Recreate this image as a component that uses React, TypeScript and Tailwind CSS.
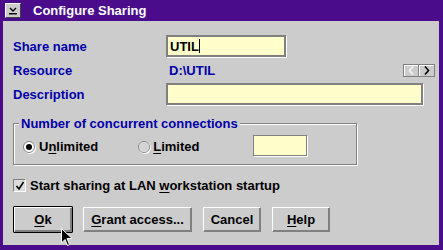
import * as React from "react";

const font = "font-['Liberation_Sans',Arial,sans-serif] font-bold text-[13px] leading-none";

function Field({ w, children }: { w: string; children?: React.ReactNode }) {
  return (
    <div
      className={`${w} h-[22px] flex items-center border-2 border-[#808080] bg-[#ffffcc] shadow-[1px_1px_0_#fff] pl-[1px]`}
    >
      {children}
    </div>
  );
}

function Radio({ checked }: { checked?: boolean }) {
  return (
    <span className="w-[12px] h-[12px] rounded-full border border-[#808080] bg-white flex items-center justify-center shadow-[1px_1px_0_#fff]">
      {checked ? (
        <span className="w-[6px] h-[6px] rounded-full bg-black" />
      ) : (
        <span className="w-[10px] h-[10px] rounded-full bg-[#d4d4d4]" />
      )}
    </span>
  );
}

function Btn({ w, children, isDefault }: { w: string; children: React.ReactNode; isDefault?: boolean }) {
  const inner = (
    <div
      className={`${w} h-[25px] flex items-center justify-center bg-[#cccccc] border border-t-white border-l-white border-b-[#808080] border-r-[#808080] shadow-[inset_-1px_-1px_0_#808080]`}
    >
      {children}
    </div>
  );
  if (isDefault) {
    return <div className="border border-black rounded-[1px]">{inner}</div>;
  }
  return <div className="mt-[1px] self-start">{inner}</div>;
}

export default function App() {
  return (
    <div className={`w-[443px] h-[250px] bg-[#4b0c8c] flex flex-col ${font}`}>
      {/* title bar */}
      <div className="h-[21px] flex items-center">
        <div className="ml-[5px] w-[16px] h-[15px] bg-[#cccccc] border border-t-white border-l-white border-b-[#404040] border-r-[#404040] flex items-center justify-center">
          <svg width="10" height="8" viewBox="0 0 10 8">
            <path d="M2 1 L5 4 L8 1" stroke="#000" strokeWidth="1.4" fill="none" />
            <rect x="1" y="6" width="8" height="1.5" fill="#000" />
          </svg>
        </div>
        <span className="ml-[12px] text-white">Configure Sharing</span>
      </div>

      {/* client area */}
      <div className="relative flex-1 ml-[3px] mr-[4px] mb-[5px] bg-[#cccccc] flex flex-col text-[#0000aa]">
        <div className="mt-[14px] h-[22px] flex items-center">
          <span className="w-[163px] pl-[10px]">Share name</span>
          <Field w="w-[120px]">
            <span className="text-black ml-[1px]">UTIL</span>
            <span className="w-[1px] h-[14px] bg-black" />
          </Field>
        </div>

        <div className="mt-[7px] h-[13px] flex items-center">
          <span className="w-[163px] pl-[10px]">Resource</span>
          <span className="pl-[3px]">D:\UTIL</span>
          <div className="ml-auto mr-[4px] flex">
            <span className="w-[16px] h-[13px] border border-[#808080] flex items-center justify-center shadow-[inset_1px_1px_0_#fff]">
              <svg width="6" height="9" viewBox="0 0 6 9">
                <path d="M5 0.5 L1.5 4.5 L5 8.5" stroke="#f4f4f4" strokeWidth="1.6" fill="none" />
              </svg>
            </span>
            <span className="w-[16px] h-[13px] border border-[#808080] border-l-0 flex items-center justify-center shadow-[inset_1px_1px_0_#fff]">
              <svg width="6" height="9" viewBox="0 0 6 9">
                <path d="M1 0.5 L4.5 4.5 L1 8.5" stroke="#000" strokeWidth="1.6" fill="none" />
              </svg>
            </span>
          </div>
        </div>

        <div className="mt-[6px] h-[22px] flex items-center">
          <span className="w-[163px] pl-[10px]">Description</span>
          <Field w="w-[257px]" />
        </div>

        {/* group box */}
        <div className="relative mt-[18px] ml-[10px] w-[344px] h-[42px] border border-[#808080] shadow-[1px_1px_0_#fff,inset_1px_1px_0_#fff]">
          <span className="absolute left-[5px] top-[-7px] bg-[#cccccc] px-[2px]">Number of concurrent connections</span>
          <div className="mt-[13px] flex items-center text-black">
            <span className="ml-[9px]">
              <Radio checked />
            </span>
            <span className="ml-[4px]">
              U<span className="underline underline-offset-2">n</span>limited
            </span>
            <span className="ml-[40px]">
              <Radio />
            </span>
            <span className="ml-[3px]">
              <span className="underline underline-offset-2">L</span>imited
            </span>
            <span className="ml-[53px] mt-[-2px] w-[54px] h-[21px] border border-[#808080] bg-[#ffffcc] shadow-[1px_1px_0_#fff]" />
          </div>
        </div>

        {/* checkbox */}
        <div className="mt-[14px] ml-[10px] flex items-center text-black">
          <span className="w-[13px] h-[13px] bg-[#dcdcdc] border border-t-[#808080] border-l-[#808080] border-b-white border-r-white flex items-center justify-center">
            <svg width="10" height="10" viewBox="0 0 10 10">
              <path d="M1.5 5 L4 8 L8.5 1" stroke="#000" strokeWidth="1.6" fill="none" />
            </svg>
          </span>
          <span className="ml-[4px]">
            Start sharing at LAN <span className="underline underline-offset-2">w</span>orkstation startup
          </span>
        </div>

        {/* buttons */}
        <div className="mt-[14px] ml-[10px] flex text-black">
          <Btn w="w-[58px]" isDefault>
            <span className="underline underline-offset-2">O</span>k
          </Btn>
          <div className="ml-[10px]">
            <Btn w="w-[109px]">
              <span className="underline underline-offset-2">G</span>rant access...
            </Btn>
          </div>
          <div className="ml-[11px]">
            <Btn w="w-[58px]">Cancel</Btn>
          </div>
          <div className="ml-[11px]">
            <Btn w="w-[58px]">
              <span className="underline underline-offset-2">H</span>elp
            </Btn>
          </div>
        </div>

        {/* mouse pointer */}
        <svg className="absolute left-[58px] top-[207px]" width="12" height="19" viewBox="0 0 12 19">
          <path d="M0.5 0.5 L0.5 15 L4 11.5 L6.5 17.5 L8.5 16.5 L6 10.5 L11 10.5 Z" fill="#000" stroke="#fff" strokeWidth="1" />
        </svg>
      </div>
    </div>
  );
}
